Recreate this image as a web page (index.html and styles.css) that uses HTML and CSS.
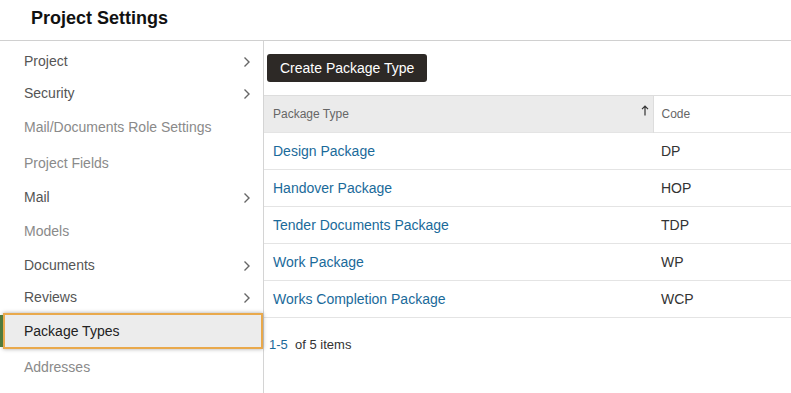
FILE: index.html
```html
<!DOCTYPE html>
<html>
<head>
<meta charset="utf-8">
<link rel="stylesheet" href="styles.css">
</head>
<body>
<header class="top"><h1>Project Settings</h1></header>
<div class="main">
  <nav class="side">
    <div class="item dark">Project<span class="chev"><svg width="8" height="12" viewBox="0 0 8 12"><path d="M1.5 1.5 L6 6 L1.5 10.5" fill="none" stroke="#666" stroke-width="1.4"/></svg></span></div>
    <div class="item dark">Security<span class="chev"><svg width="8" height="12" viewBox="0 0 8 12"><path d="M1.5 1.5 L6 6 L1.5 10.5" fill="none" stroke="#666" stroke-width="1.4"/></svg></span></div>
    <div class="item light tall">Mail/Documents Role Settings</div>
    <div class="item light tall">Project Fields</div>
    <div class="item dark">Mail<span class="chev"><svg width="8" height="12" viewBox="0 0 8 12"><path d="M1.5 1.5 L6 6 L1.5 10.5" fill="none" stroke="#666" stroke-width="1.4"/></svg></span></div>
    <div class="item light tall">Models</div>
    <div class="item dark">Documents<span class="chev"><svg width="8" height="12" viewBox="0 0 8 12"><path d="M1.5 1.5 L6 6 L1.5 10.5" fill="none" stroke="#666" stroke-width="1.4"/></svg></span></div>
    <div class="item dark">Reviews<span class="chev"><svg width="8" height="12" viewBox="0 0 8 12"><path d="M1.5 1.5 L6 6 L1.5 10.5" fill="none" stroke="#666" stroke-width="1.4"/></svg></span></div>
    <div class="item active">Package Types</div>
    <div class="item light tall">Addresses</div>
  </nav>
  <section class="content">
    <div class="toolbar"><button class="btn">Create Package Type</button></div>
    <table class="grid">
      <thead>
        <tr><th class="col-type">Package Type<span class="sort"><svg width="8" height="11" viewBox="0 0 8 11"><path d="M4 10.5 V1.2 M1 4.2 L4 1.2 L7 4.2" fill="none" stroke="#333" stroke-width="1.2"/></svg></span></th><th class="col-code">Code</th></tr>
      </thead>
      <tbody>
        <tr><td class="link">Design Package</td><td class="code">DP</td></tr>
        <tr><td class="link">Handover Package</td><td class="code">HOP</td></tr>
        <tr><td class="link">Tender Documents Package</td><td class="code">TDP</td></tr>
        <tr><td class="link">Work Package</td><td class="code">WP</td></tr>
        <tr><td class="link">Works Completion Package</td><td class="code">WCP</td></tr>
      </tbody>
    </table>
    <div class="pager"><span class="range">1-5</span>&nbsp; of 5 items</div>
  </section>
</div>
</body>
</html>
```

FILE: styles.css
```css
* { box-sizing: border-box; }
html, body { margin: 0; padding: 0; background: #fff; }
body { font-family: "Liberation Sans", Arial, sans-serif; color: #333; width: 791px; height: 393px; overflow: hidden; }

.top { height: 41px; border-bottom: 1px solid #d0d0d0; padding-left: 31px; display: flex; align-items: center; }
.top h1 { margin: 0; font-size: 18px; font-weight: bold; color: #111; position: relative; top: -2px; }

.main { display: flex; height: 352px; }
.side { width: 264px; border-right: 1px solid #d4d4d4; padding-top: 4px; flex: none; }
.item { height: 32px; display: flex; align-items: center; padding-left: 24px; padding-right: 12px; font-size: 14px; justify-content: space-between; }
.item.dark { color: #555; }
.item.tall { height: 36px; }
.item.light { color: #8a8a8a; }
.chev { display: flex; align-items: center; margin-top: 1px; }
.item.active { height: 36px; margin: 0 0 0 3px; padding-left: 19px; color: #222; background: #ececec; border: 2px solid #e9a94c; box-shadow: 0 0 4px rgba(0,0,0,0.35); position: relative; }
.item.active::before { content: ""; position: absolute; left: -5px; top: 0; bottom: 0; width: 3px; background: #4f7a3d; }

.content { flex: 1; }
.toolbar { padding: 13px 0 0 3px; height: 54px; }
.btn { height: 28px; padding: 0 13px; background: #2d2926; color: #fff; border: none; border-radius: 3px; font-family: "Liberation Sans", Arial, sans-serif; font-size: 14px; }

.grid { width: 100%; border-collapse: collapse; }
.grid th { height: 37px; text-align: left; font-weight: normal; font-size: 12px; color: #666; border-top: 1px solid #ddd; padding: 0 0 0 9px; }
.grid th.col-type { background: #ebebeb; width: 389px; position: relative; border-right: 1px solid #ddd; }
.grid th.col-code { padding-left: 8px; }
.sort { position: absolute; right: 4px; top: 9px; display: flex; }
.grid td { height: 37px; border-top: 1px solid #e4e4e4; font-size: 14px; padding: 0 0 0 9px; }
.grid tbody tr:last-child td { border-bottom: 1px solid #e4e4e4; }
.grid td.link { color: #1a6a9a; }
.grid td.code { color: #333; padding-left: 8px; }

.pager { padding: 19px 0 0 5px; font-size: 13px; color: #333; }
.pager .range { color: #1a6a9a; }
```
